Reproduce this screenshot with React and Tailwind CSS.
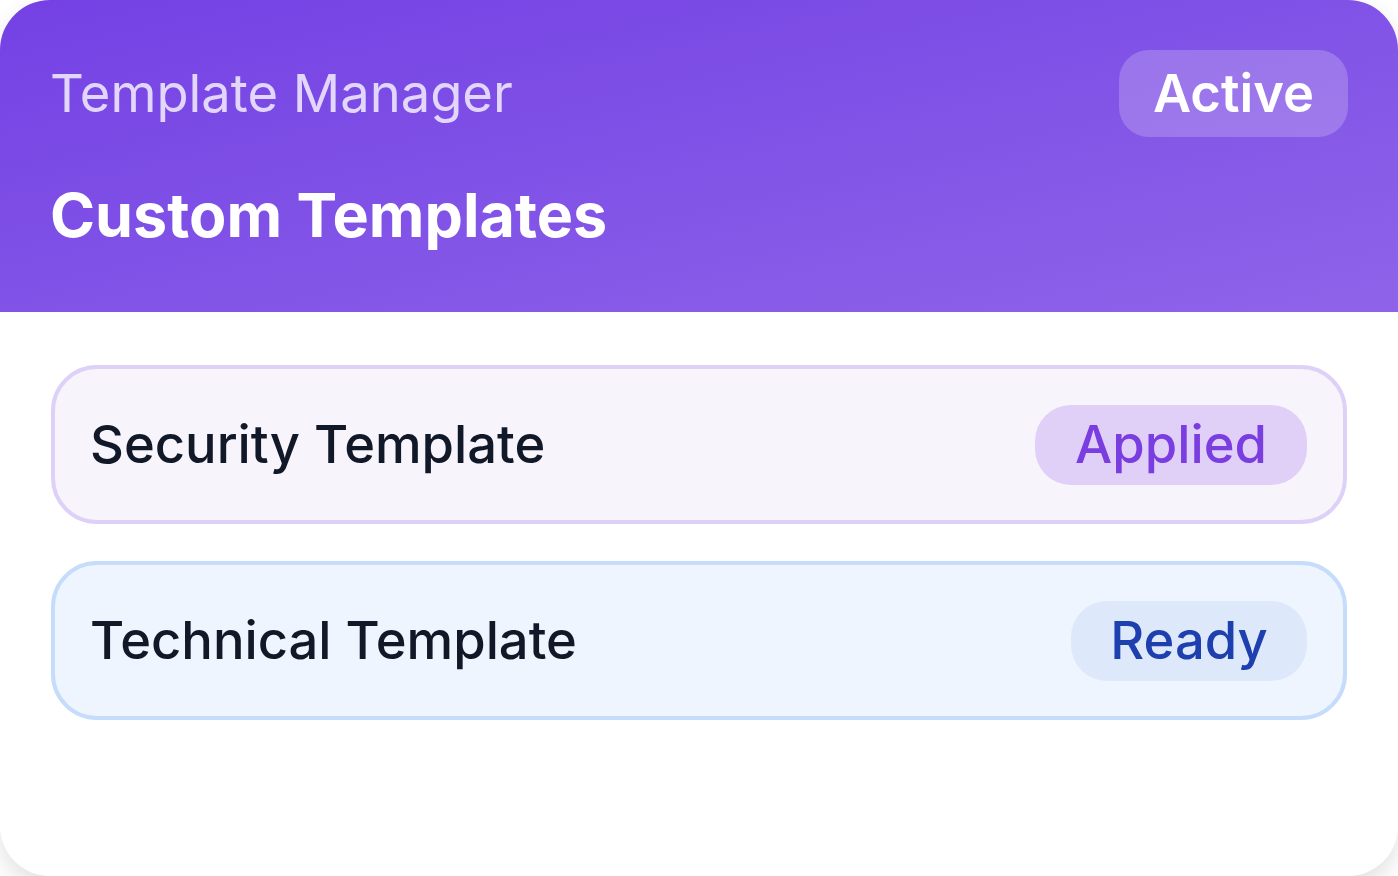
const templates = [
    {
        name: "Security Template",
        status: "Applied",
        row: "bg-[#f7f4fc] border-[#ddd1f8]",
        badge: "bg-[#e0d0f8] text-[#7a3de0] w-[272px]",
    },
    {
        name: "Technical Template",
        status: "Ready",
        row: "bg-[#eef5fe] border-[#c5dcfb]",
        badge: "bg-[#dde8fa] text-[#1e3fae] w-[236px]",
    },
];

const App = () => {
    return (
        <div className="w-[1398px] h-[876px] bg-white font-['Inter',sans-serif]">
            <div className="h-full rounded-[50px] bg-white shadow-[0_10px_25px_rgba(0,0,0,0.12)] overflow-hidden flex flex-col">
                <header className="h-[312px] bg-gradient-to-br from-[#7440e4] to-[#8f63e9] pl-[50px] pr-[50px] pt-[50px]">
                    <div className="flex items-center justify-between h-[87px]">
                        <span className="text-[52.5px] leading-none text-[#e2d6fb]">
                            Template Manager
                        </span>
                        <span className="h-[87px] w-[229px] rounded-[30px] bg-white/20 text-white text-[52.5px] font-semibold flex items-center justify-center">
                            Active
                        </span>
                    </div>
                    <h1 className="mt-[48px] text-[61px] leading-none font-bold text-white">
                        Custom Templates
                    </h1>
                </header>
                <div className="flex flex-col gap-[37px] px-[51px] pt-[53px]">
                    {templates.map((t) => (
                        <div
                            key={t.name}
                            className={`h-[159px] rounded-[46px] border-4 flex items-center justify-between pl-[35px] pr-[36px] ${t.row}`}
                        >
                            <span className="text-[52.5px] font-medium text-[#111827]">{t.name}</span>
                            <span
                                className={`h-[80px] rounded-[36px] flex items-center justify-center text-[52.5px] font-medium ${t.badge}`}
                            >
                                {t.status}
                            </span>
                        </div>
                    ))}
                </div>
            </div>
        </div>
    );
};

export default App;
